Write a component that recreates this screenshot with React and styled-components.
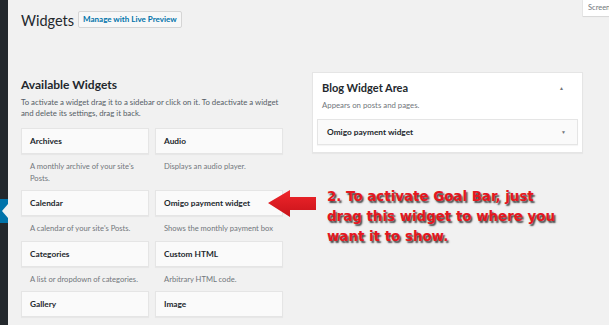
import React from "react";
import styled, { createGlobalStyle } from "styled-components";

const font = `"Lato", "Open Sans", "Liberation Sans", sans-serif`;

const GlobalStyle = createGlobalStyle`
  html, body {
    margin: 0;
    padding: 0;
    background: #f1f1f1;
  }
  body {
    font-family: ${font};
    color: #23282d;
  }
`;

const Page = styled.div`
  display: flex;
  width: 609px;
  height: 325px;
  overflow: hidden;
`;

const AdminMenu = styled.div`
  width: 8px;
  flex-shrink: 0;
  background: #23282d;
  display: flex;
  flex-direction: column;
  padding-top: 199px;
`;

const CurrentItem = styled.div`
  height: 24px;
  background: #0073aa;
  position: relative;
  &::after {
    content: "";
    position: absolute;
    right: 0;
    top: 5px;
    border-style: solid;
    border-width: 7px 6px 7px 0;
    border-color: transparent #f1f1f1 transparent transparent;
  }
`;

const Main = styled.div`
  flex: 1;
  padding-left: 13px;
  display: flex;
  flex-direction: column;
`;

const Header = styled.div`
  display: flex;
  align-items: flex-start;
  height: 60px;
  flex-shrink: 0;
`;

const Title = styled.h1`
  margin: 10px 0 0;
  font-size: 14.5px;
  font-weight: 400;
  line-height: 22px;
  color: #23282d;
`;

const LiveButton = styled.button`
  margin: 11px 0 0 4px;
  height: 17px;
  padding: 0 4px;
  border: 1px solid #d5d5d5;
  background: #f7f7f7;
  border-radius: 2px;
  color: #0073aa;
  font-family: ${font};
  font-size: 8px;
  font-weight: 700;
  line-height: 15px;
  white-space: nowrap;
`;

const ScreenTab = styled.div`
  margin-left: auto;
  width: 21px;
  height: 16px;
  background: #fff;
  box-shadow: 0 0 0 1px rgba(0, 0, 0, 0.04), 0 1px 1px rgba(0, 0, 0, 0.06);
  font-size: 7.5px;
  color: #72777c;
  line-height: 16px;
  padding-left: 5px;
  overflow: hidden;
  white-space: nowrap;
`;

const Columns = styled.div`
  display: flex;
  align-items: flex-start;
  gap: 29px;
  position: relative;
  flex-shrink: 0;
`;

const LeftCol = styled.div`
  width: 262px;
  flex-shrink: 0;
  padding-top: 17px;
`;

const SectionTitle = styled.h2`
  margin: 0;
  font-size: 12px;
  font-weight: 700;
  line-height: 16px;
  color: #23282d;
`;

const Intro = styled.p`
  margin: 4px 0 9px;
  font-size: 7.8px;
  line-height: 11px;
  color: #555d66;
`;

const WidgetGrid = styled.div`
  display: grid;
  grid-template-columns: 128px 128px;
  column-gap: 6px;
`;

const WidgetCell = styled.div`
  display: flex;
  flex-direction: column;
`;

const WidgetTop = styled.div`
  height: 26px;
  box-sizing: border-box;
  background: #fafafa;
  border: 1px solid #e5e5e5;
  box-shadow: 0 1px 1px rgba(0, 0, 0, 0.04);
  padding: 0 8px;
  font-size: 8.3px;
  font-weight: 700;
  line-height: 24px;
  color: #23282d;
  white-space: nowrap;
`;

const WidgetDesc = styled.div`
  padding: 7px 9px 6px;
  font-size: 7.6px;
  line-height: 11.5px;
  color: #72777c;
`;

const RightCol = styled.div`
  width: 271px;
  flex-shrink: 0;
  padding-top: 12px;
`;

const SidebarPanel = styled.div`
  background: #fff;
  border: 1px solid #e5e5e5;
  box-shadow: 0 1px 1px rgba(0, 0, 0, 0.04);
  padding: 8px 4px 7px;
`;

const PanelHead = styled.div`
  display: flex;
  align-items: center;
  justify-content: space-between;
  padding: 0 14px 0 5px;
`;

const PanelTitle = styled.h2`
  margin: 0;
  font-size: 11px;
  font-weight: 700;
  line-height: 14px;
  color: #23282d;
`;

const Caret = styled.span`
  font-size: 5px;
  color: #72777c;
  line-height: 1;
`;

const PanelDesc = styled.p`
  margin: 5px 0 8px 5px;
  font-size: 7.8px;
  line-height: 11px;
  color: #72777c;
`;

const PlacedWidget = styled(WidgetTop)`
  display: flex;
  align-items: center;
  justify-content: space-between;
  padding: 0 11px 0 9px;
`;

const Note = styled.div`
  margin: 34px 0 0 15px;
  font-family: "DejaVu Sans", "Liberation Sans", sans-serif;
  font-weight: 700;
  font-size: 13.4px;
  line-height: 20px;
  color: #e5171e;
  text-shadow: 1.5px 1.5px 1.5px rgba(30, 30, 30, 0.8);
`;

const Arrow = styled.svg`
  position: absolute;
  left: 247px;
  top: 129px;
`;

const widgets = [
  { name: "Archives", desc: "A monthly archive of your site's Posts." },
  { name: "Audio", desc: "Displays an audio player." },
  { name: "Calendar", desc: "A calendar of your site's Posts." },
  { name: "Omigo payment widget", desc: "Shows the monthly payment box" },
  { name: "Categories", desc: "A list or dropdown of categories." },
  { name: "Custom HTML", desc: "Arbitrary HTML code." },
  { name: "Gallery", desc: "" },
  { name: "Image", desc: "" },
];

export default function App() {
  return (
    <>
      <GlobalStyle />
      <Page>
        <AdminMenu>
          <CurrentItem />
        </AdminMenu>
        <Main>
          <Header>
            <Title>Widgets</Title>
            <LiveButton>Manage with Live Preview</LiveButton>
            <ScreenTab>Screen Options</ScreenTab>
          </Header>
          <Columns>
            <LeftCol>
              <SectionTitle>Available Widgets</SectionTitle>
              <Intro>
                To activate a widget drag it to a sidebar or click on it. To deactivate a widget
                <br />
                and delete its settings, drag it back.
              </Intro>
              <WidgetGrid>
                {widgets.map((w) => (
                  <WidgetCell key={w.name}>
                    <WidgetTop>{w.name}</WidgetTop>
                    {w.desc && <WidgetDesc>{w.desc}</WidgetDesc>}
                  </WidgetCell>
                ))}
              </WidgetGrid>
            </LeftCol>
            <RightCol>
              <SidebarPanel>
                <PanelHead>
                  <PanelTitle>Blog Widget Area</PanelTitle>
                  <Caret>▲</Caret>
                </PanelHead>
                <PanelDesc>Appears on posts and pages.</PanelDesc>
                <PlacedWidget>
                  Omigo payment widget
                  <Caret>▼</Caret>
                </PlacedWidget>
              </SidebarPanel>
              <Note>
                2. To activate Goal Bar, just
                <br />
                drag this widget to where you
                <br />
                want it to show.
              </Note>
            </RightCol>
            <Arrow width="50" height="30" viewBox="0 0 50 30">
              <defs>
                <linearGradient id="arrowFill" x1="0" y1="0" x2="0" y2="1">
                  <stop offset="0" stopColor="#f0262b" />
                  <stop offset="1" stopColor="#c8131a" />
                </linearGradient>
              </defs>
              <path d="M0 14 L22 1 L22 8 L48 8 L48 21 L22 21 L22 28 Z" fill="url(#arrowFill)" />
            </Arrow>
          </Columns>
        </Main>
      </Page>
    </>
  );
}
